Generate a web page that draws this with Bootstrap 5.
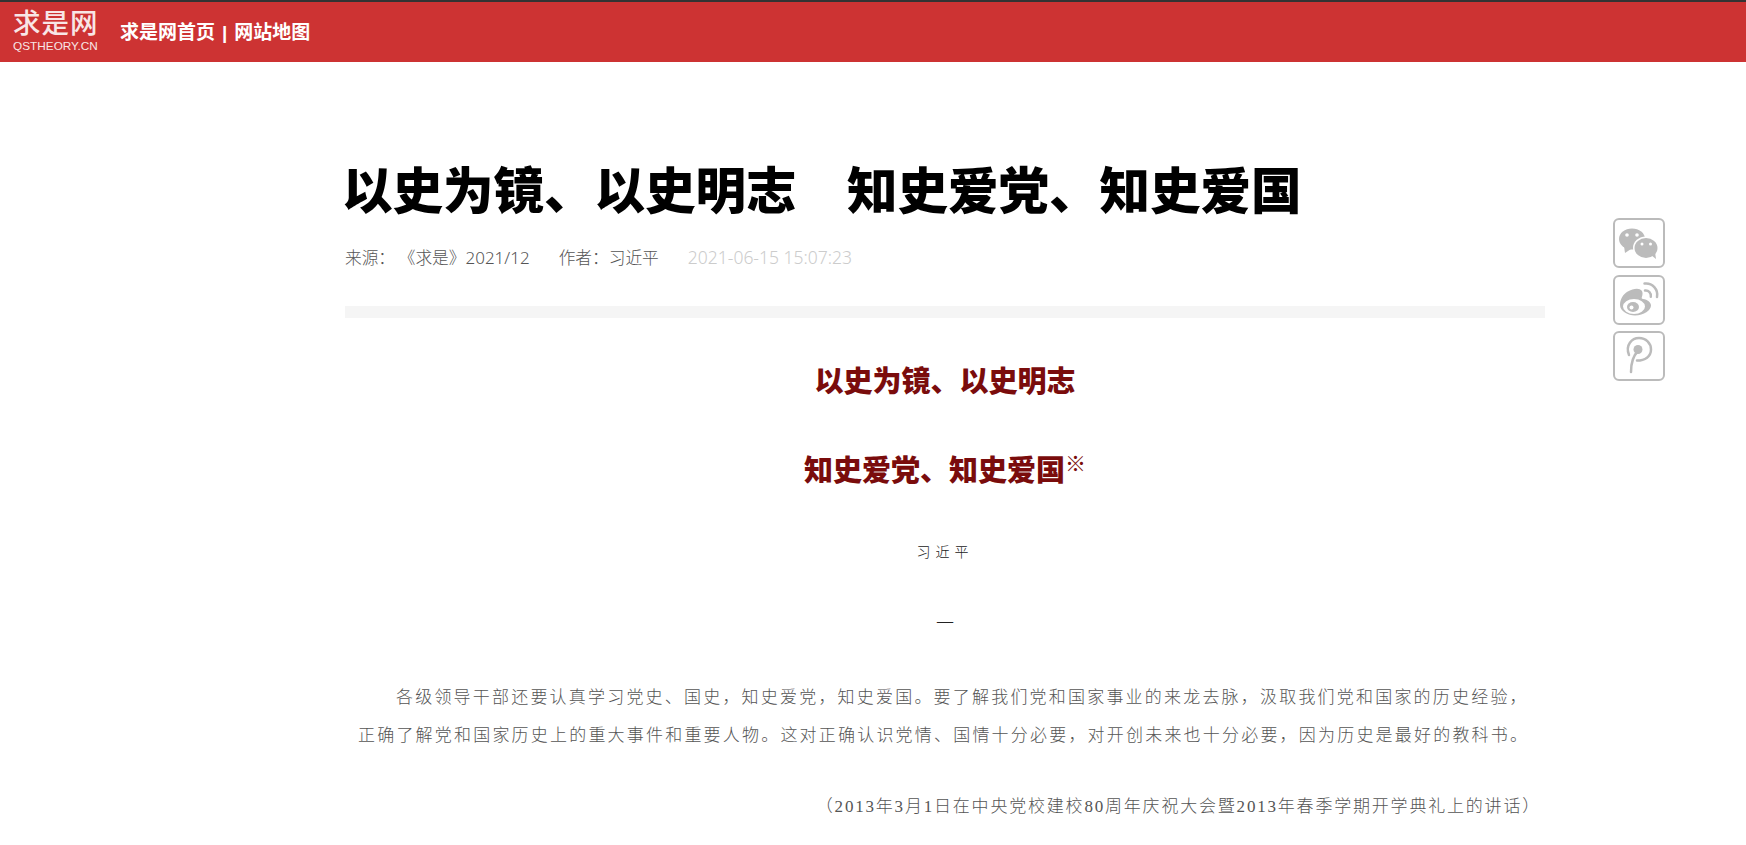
<!DOCTYPE html>
<html lang="zh-CN">
<head>
  <meta charset="UTF-8">
  <meta name="viewport" content="width=device-width, initial-scale=1.0">
  <title>以史为镜、以史明志 知史爱党、知史爱国</title>
  <link href="https://cdn.jsdelivr.net/npm/bootstrap@5.3.0/dist/css/bootstrap.min.css" rel="stylesheet">
  <style>
    body { font-family: "Noto Sans CJK SC", sans-serif; background: #fff; }
    .top-head { height: 62px; background: #cd3333; border-top: 2px solid #333; padding-left: 13px; }
    .logo-box { width: 84px; color: #f8e6e6; padding-bottom: 3px; }
    .logo-cn { font-family: "Liberation Sans", "Noto Sans CJK SC", sans-serif; font-size: 27.5px; letter-spacing: 1px; font-weight: 500; line-height: 31px; white-space: nowrap; }
    .logo-en { font-family: "Liberation Sans", sans-serif; font-size: 11.8px; line-height: 14px; white-space: nowrap; }
    .head-links { margin-left: 23px; font-size: 19px; font-weight: 700; color: #fff; }
    .head-links a { color: #fff; text-decoration: none; }
    .head-sep { margin: 0 7px; font-family: "Liberation Sans", sans-serif; }
    .article-wrap { width: 1200px; margin-left: 345px; }
    .article-title { margin: 0 0 0 -3px; padding-top: 89px; font-size: 50.5px; font-weight: 900; line-height: 72px; color: #000; white-space: nowrap; }
    .meta-row { margin-top: 22px; font-size: 16.7px; font-weight: 300; line-height: 24px; color: #555; gap: 29px; }
    .meta-row .meta-date { color: #ccc; font-family: "Noto Sans", sans-serif; font-size: 17.5px; }
    .meta-num { font-family: "Noto Sans", sans-serif; font-size: 17px; }
    .grey-rule { height: 12px; margin-top: 36px; background: #f5f5f5; }
    .article-body { font-family: "Liberation Serif", "Noto Sans CJK SC", serif; color: #333; }
    .sub-head { margin: 0; font-family: "Noto Sans CJK SC", sans-serif; font-size: 29px; font-weight: 900; line-height: 42px; color: #7a0c0c; text-align: center; }
    .sub-head sup { font-size: 21px; font-weight: 700; top: -0.5em; line-height: 0; }
    .sub-one { margin-top: 40px; }
    .sub-two { margin-top: 47px; }
    .author-line { margin-top: 52px; font-size: 14px; font-weight: 300; letter-spacing: 5px; line-height: 24px; text-align: center; color: #222; }
    .num-line { margin-top: 47px; font-size: 18px; font-weight: 300; line-height: 24px; text-align: center; color: #222; }
    .para { margin: 43px 0 0; padding: 0 10px 0 13px; font-size: 17px; font-weight: 300; letter-spacing: 2.2px; line-height: 38px; text-indent: 38px; color: #555; }
    .cite-line { margin: 33px 0 0; padding-right: 4px; font-size: 17px; font-weight: 300; line-height: 38px; letter-spacing: 1.8px; text-align: right; color: #555; }
    .share-bar { position: absolute; left: 1613px; top: 218px; gap: 6.5px; }
    .share-btn { display: block; width: 52px; height: 50px; border: 2px solid #bbb; border-radius: 6px; background: #fff; }
    .share-btn svg { display: block; width: 48px; height: 46px; }
  </style>
</head>
<body>
  <div class="top-head d-flex align-items-center">
    <div class="logo-box">
      <div class="logo-cn">求是网</div>
      <div class="logo-en">QSTHEORY.CN</div>
    </div>
    <div class="head-links">
      <a href="#">求是网首页</a><span class="head-sep">|</span><a href="#">网站地图</a>
    </div>
  </div>

  <div class="article-wrap">
    <h1 class="article-title">以史为镜、以史明志&#x3000;知史爱党、知史爱国</h1>
    <div class="meta-row d-flex">
      <span>来源&#xFF1A; 《求是》<span class="meta-num">2021/12</span></span>
      <span>作者&#xFF1A;习近平</span>
      <span class="meta-date">2021-06-15 15:07:23</span>
    </div>
    <div class="grey-rule"></div>
    <div class="article-body">
      <h2 class="sub-head sub-one">以史为镜、以史明志</h2>
      <h2 class="sub-head sub-two">知史爱党、知史爱国<sup>※</sup></h2>
      <div class="author-line">习近平</div>
      <div class="num-line">一</div>
      <p class="para">各级领导干部还要认真学习党史、国史&#xFF0C;知史爱党&#xFF0C;知史爱国。要了解我们党和国家事业的来龙去脉&#xFF0C;汲取我们党和国家的历史经验&#xFF0C;正确了解党和国家历史上的重大事件和重要人物。这对正确认识党情、国情十分必要&#xFF0C;对开创未来也十分必要&#xFF0C;因为历史是最好的教科书。</p>
      <p class="cite-line">&#xFF08;2013年3月1日在中央党校建校80周年庆祝大会暨2013年春季学期开学典礼上的讲话&#xFF09;</p>
    </div>
  </div>

  <div class="share-bar d-flex flex-column">
    <a class="share-btn" href="#" aria-label="微信">
      <svg viewBox="0 0 48 46">
        <ellipse cx="17" cy="19" rx="13" ry="10.500" fill="#bbb"/>
        <polygon points="9,26 10,33 16,29" fill="#bbb"/>
        <ellipse cx="31" cy="28" rx="13" ry="11.500" fill="#fff"/>
        <ellipse cx="31" cy="28" rx="11.500" ry="10" fill="#bbb"/>
        <polygon points="36,35 41,39 40,32" fill="#bbb"/>
        <circle cx="12" cy="15" r="1.800" fill="#fff"/><circle cx="22" cy="15" r="1.800" fill="#fff"/>
        <circle cx="27" cy="24" r="1.500" fill="#fff"/><circle cx="35.500" cy="24" r="1.500" fill="#fff"/>
      </svg>
    </a>
    <a class="share-btn" href="#" aria-label="微博">
      <svg viewBox="0 0 48 46">
        <path fill="#bbb" d="M28 22c-1-.3-1.600-.5-1.200-1.700 1-2.700 1-5 0-6.500-2.200-3-8-2.800-14.500 1C8.500 17 5 22 5 28c0 6 8 10.500 15 10.500 9 0 16-5.500 16-10 0-3.200-3.500-5.800-8-6.500z"/>
        <ellipse cx="19" cy="29.500" rx="11" ry="7.500" fill="#fff"/>
        <ellipse cx="18" cy="30" rx="6" ry="5" fill="#bbb"/>
        <circle cx="16.500" cy="30.500" r="2" fill="#fff"/>
        <path fill="none" stroke="#bbb" stroke-width="2.500" stroke-linecap="round" d="M30 13.500c3.500-.5 6.500 2.500 5.800 6.200M29.500 6.500c8-1 14 6 12.500 13.500"/>
      </svg>
    </a>
    <a class="share-btn" href="#" aria-label="拼客">
      <svg viewBox="0 0 48 46">
        <circle cx="23" cy="16.500" r="4.500" fill="#bbb"/>
        <path fill="none" stroke="#bbb" stroke-width="2.500" stroke-linecap="round" d="M14 22C10 12 17 5 24 5c7 0 12 5 12 11.500 0 7-6 11-14 11"/>
        <path fill="none" stroke="#bbb" stroke-width="2.500" stroke-linecap="round" d="M23 18c-4 4-7 11-7 21"/>
      </svg>
    </a>
  </div>
  <script src="https://cdn.jsdelivr.net/npm/bootstrap@5.3.0/dist/js/bootstrap.bundle.min.js"></script>
</body>
</html>
